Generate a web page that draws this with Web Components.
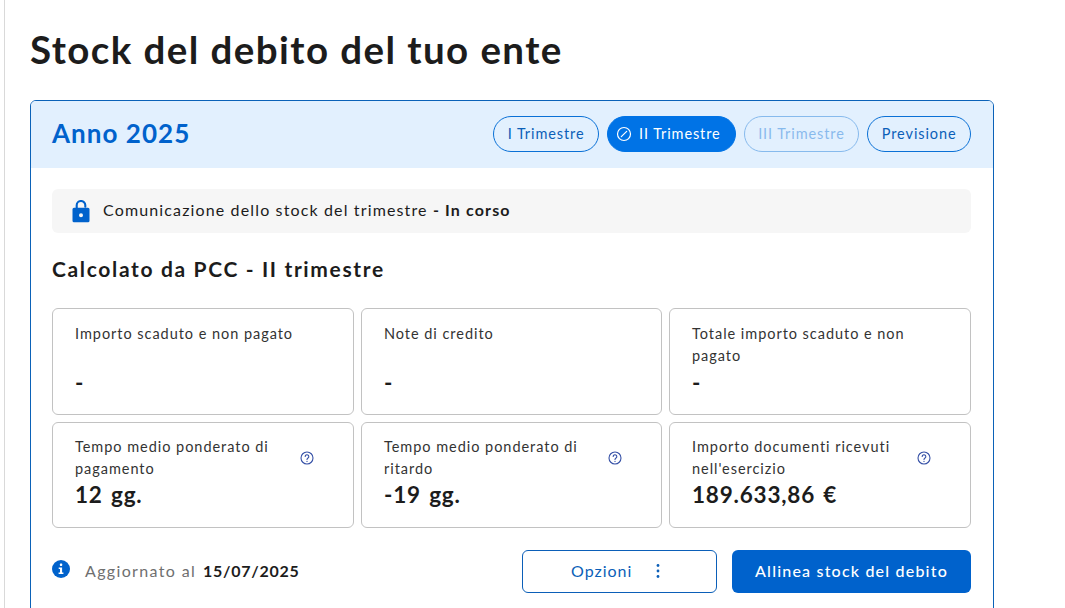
<!DOCTYPE html>
<html lang="it"><head><meta charset="utf-8"><title>Stock del debito</title>
<style>
html,body{margin:0;height:608px;overflow:hidden;background:#fff}
body{font-family:Lato,sans-serif;color:#1c1c1c}
</style></head><body>
<stock-page>
  <span slot="title">Stock del debito del tuo ente</span>
  <year-card>
    <span slot="year">Anno 2025</span>
    <quarter-pill slot="pills">I Trimestre</quarter-pill>
    <quarter-pill slot="pills" state="active">II Trimestre</quarter-pill>
    <quarter-pill slot="pills" state="disabled">III Trimestre</quarter-pill>
    <quarter-pill slot="pills">Previsione</quarter-pill>
    <status-bar>Comunicazione dello stock del trimestre <b>- In corso</b></status-bar>
    <section-title>Calcolato da PCC - II trimestre</section-title>
    <metric-grid>
      <metric-card label="Importo scaduto e non pagato" value="-"></metric-card>
      <metric-card label="Note di credito" value="-"></metric-card>
      <metric-card label="Totale importo scaduto e non pagato" value="-"></metric-card>
      <metric-card label="Tempo medio ponderato di pagamento" value="12 gg." help></metric-card>
      <metric-card label="Tempo medio ponderato di ritardo" value="-19 gg." help></metric-card>
      <metric-card label="Importo documenti ricevuti nell'esercizio" value="189.633,86 €" help></metric-card>
    </metric-grid>
    <card-footer>
      <span slot="label">Aggiornato al</span><span slot="date">15/07/2025</span>
      <action-button slot="actions" kind="outline">Opzioni</action-button>
      <action-button slot="actions" kind="solid">Allinea stock del debito</action-button>
    </card-footer>
  </year-card>
</stock-page>
<script>
const F='Lato,sans-serif';
function def(name, css, html){
  customElements.define(name, class extends HTMLElement{
    connectedCallback(){
      if(this.shadowRoot) return;
      const r=this.attachShadow({mode:'open'});
      r.innerHTML='<style>'+css+'</style>'+(typeof html==='function'?html(this):html);
    }
  });
}
def('stock-page',`
:host{display:block;margin-left:4px;border-left:1px solid #d9d9d9;padding-left:25px;width:964px;min-height:640px}
h1{margin:0;padding-top:26px;height:100px;box-sizing:border-box;font:700 38.500px/46px ${F};letter-spacing:1.420px;color:#1c1c1c;white-space:nowrap}
`,`<h1><slot name="title"></slot></h1><slot></slot>`);

def('year-card',`
:host{display:block;box-sizing:border-box;width:964px;height:560px;border:1px solid #0b62b8;border-radius:6px;overflow:hidden;background:#fff}
header{height:67px;background:#e2f0fe;display:flex;align-items:center;justify-content:space-between;padding:0 22px 0 21px}
h2{margin:-3px 0 0;font:700 26px/32px ${F};letter-spacing:1.050px;color:#0062cc}
nav{display:flex;gap:8px;margin-top:-1px}
main{padding:21px 22px 0 21px}
`,`<header><h2><slot name="year"></slot></h2><nav><slot name="pills"></slot></nav></header><main><slot></slot></main>`);

def('quarter-pill',`
:host{display:inline-flex;align-items:center;box-sizing:border-box;height:36px;padding:0 13.500px;border:1px solid #0a70d6;border-radius:18px;font:400 14.500px/20px ${F};letter-spacing:.9px;color:#0b5fb8;white-space:nowrap}
:host([state=active]){background:#0073e6;border-color:#0073e6;color:#fff;gap:7px;padding:0 14px 0 8px}
:host([state=disabled]){opacity:.42;color:#0a70d6}
svg{display:block;width:16px;height:16px}
`,el=>(el.getAttribute('state')==='active'?`<svg viewBox="0 0 16 16" fill="none" stroke="#fff" stroke-width="1.200"><circle cx="8" cy="8" r="6.500"/><path d="M5.300 10.700 10.700 5.300" stroke-linecap="round"/></svg>`:'')+`<slot></slot>`);

def('status-bar',`
:host{display:flex;align-items:center;box-sizing:border-box;height:44px;padding:0 20px;gap:13px;background:#f6f6f6;border-radius:6px;font:400 16px/20px ${F};letter-spacing:1.140px;color:#1c1c1c;white-space:nowrap}
span{display:block;padding-bottom:3px}
svg{display:block;width:18px;height:23px;flex:none}
::slotted(b){font-weight:700}
`,`<svg viewBox="0 0 18 23"><path d="M4.700 9V5.300a4.300 4.300 0 0 1 8.600 0v1.400" fill="none" stroke="#0062cc" stroke-width="2.100" stroke-linecap="round"/><path fill-rule="evenodd" fill="#0062cc" d="M2 7.700h14a1.500 1.500 0 0 1 1.500 1.500v11.600a1.500 1.500 0 0 1-1.500 1.500H2a1.500 1.500 0 0 1-1.500-1.500V9.200A1.500 1.500 0 0 1 2 7.700ZM9 13.200a2 2 0 1 0 0 4 2 2 0 0 0 0-4Z"/></svg><span><slot></slot></span>`);

def('section-title',`
:host{display:block;margin-top:23px;height:52px;font:700 21px/26px ${F};letter-spacing:1.650px;color:#1c1c1c;white-space:nowrap}
`,`<slot></slot>`);

def('metric-grid',`
:host{display:grid;grid-template-columns:302px 301px 302px;grid-template-rows:107px 106px;column-gap:7px;row-gap:7px;width:919px}
`,`<slot></slot>`);

def('metric-card',`
:host{display:flex;box-sizing:border-box;border:1px solid #c2c2c2;border-radius:6px;padding:14px 22px 0;background:#fff;align-items:flex-start}
.t{flex:1;min-width:0}
.l{font:400 14.500px/21.500px ${F};letter-spacing:.960px;color:#333;height:43px}
.v{margin-top:3px;font:700 22.500px/28px ${F};letter-spacing:.800px;word-spacing:2px;color:#1c1c1c;white-space:nowrap}
:host([help]){padding-top:13px;padding-right:39px}
:host([help]) .l{width:215px}
:host([help]) .v{margin-top:2px}
svg{display:block;flex:none;width:14px;height:14px;margin-top:15px}
`,el=>`<div class="t"><div class="l">${el.getAttribute('label')}</div><div class="v">${el.getAttribute('value')}</div></div>`+(el.hasAttribute('help')?`<svg viewBox="0 0 14 14" fill="none" stroke="#3550a6" stroke-width="1.100"><circle cx="7" cy="7" r="6"/><path d="M5.200 5.500a1.800 1.800 0 1 1 2.800 1.500c-.7.450-1 .8-1 1.500" stroke-linecap="round"/><circle cx="7" cy="10.300" r=".4" fill="#3550a6" stroke-width=".5"/></svg>`:''));

def('card-footer',`
:host{display:flex;align-items:flex-start;justify-content:space-between;margin-top:22px;width:919px}
.info{display:flex;align-items:center;height:42px;white-space:nowrap;font:400 16px/20px ${F};letter-spacing:1.350px;color:#6f6f6f}
svg{display:block;width:18px;height:18px;margin:0 15px 0 0;position:relative;top:-2px}
.d{margin-left:7px;font-weight:700;color:#1c1c1c;letter-spacing:.720px}
.a{display:flex;gap:15px}
`,`<div class="info"><svg viewBox="0 0 18 18"><circle cx="9" cy="9" r="9" fill="#0062cc"/><rect x="7.900" y="3.600" width="2.300" height="2.300" rx=".6" fill="#fff"/><path d="M6.700 7.500h3.400v5h1.300v1.500H6.600v-1.500H8v-3.500H6.700Z" fill="#fff"/></svg><slot name="label"></slot><span class="d"><slot name="date"></slot></span></div><div class="a"><slot name="actions"></slot></div>`);

def('action-button',`
:host{display:inline-flex;align-items:center;justify-content:center;box-sizing:border-box;height:43px;padding-bottom:2px;border-radius:6px;font:400 16px/20px ${F};letter-spacing:1px;white-space:nowrap}
:host([kind=outline]){width:195px;border:1px solid #0b5fb8;color:#0b5fb8;gap:24px;background:#fff;justify-content:flex-start;padding-left:48px}
:host([kind=solid]){width:239px;background:#0062cc;color:#fff;font-weight:500;letter-spacing:1.200px}
svg{display:block;width:4px;height:16px}
`,el=>`<slot></slot>`+(el.getAttribute('kind')==='outline'?`<svg viewBox="0 0 4 16" fill="#0b5fb8"><circle cx="2" cy="2.500" r="1.400"/><circle cx="2" cy="8" r="1.400"/><circle cx="2" cy="13.500" r="1.400"/></svg>`:''));
</script>
</body></html>
